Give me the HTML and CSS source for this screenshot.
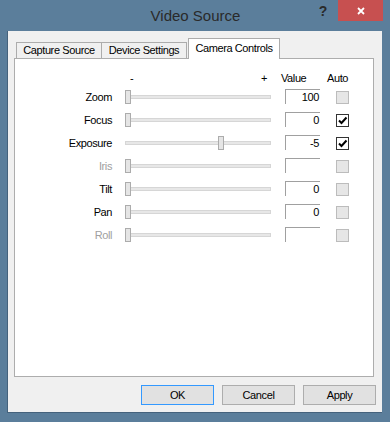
FILE: index.html
```html
<!DOCTYPE html>
<html lang="en">
<head>
    <meta charset="UTF-8">
    <title>Video Source</title>
    <link rel="stylesheet" href="styles.css">
</head>
<body>
    <div class="window">
        <div class="title-bar">
            <div></div>
            <div class="title">Video Source</div>
            <div class="title-controls">
                <span class="help">?</span>
                <span class="close">
                    <svg width="8" height="8" viewBox="0 0 8 8"><path d="M1 1 L7 7 M7 1 L1 7" stroke="#fff" stroke-width="1.8" fill="none"/></svg>
                </span>
            </div>
        </div>

        <div class="client">
            <div class="tabs">
                <div class="tab tab-capture">Capture Source</div>
                <div class="tab tab-device">Device Settings</div>
                <div class="tab tab-selected">Camera Controls</div>
            </div>

            <div class="tab-panel">
                <div class="control-grid header-row">
                    <div></div>
                    <div class="range-marks"><span>-</span><span>+</span></div>
                    <div class="head-value">Value</div>
                    <div class="head-auto">Auto</div>
                </div>

                <div class="control-grid control-row">
                    <div class="label">Zoom</div>
                    <div class="slider"><div class="track"></div><div class="thumb" style="left: 0px"></div></div>
                    <div class="value">100</div>
                    <div class="check disabled"></div>
                </div>
                <div class="control-grid control-row">
                    <div class="label">Focus</div>
                    <div class="slider"><div class="track"></div><div class="thumb" style="left: 0px"></div></div>
                    <div class="value">0</div>
                    <div class="check checked"><svg width="11" height="11" viewBox="0 0 11 11"><path d="M2 5.5 L4.5 8 L9.5 2.5" stroke="#000" stroke-width="2" fill="none"/></svg></div>
                </div>
                <div class="control-grid control-row">
                    <div class="label">Exposure</div>
                    <div class="slider"><div class="track"></div><div class="thumb" style="left: 93px"></div></div>
                    <div class="value">-5</div>
                    <div class="check checked"><svg width="11" height="11" viewBox="0 0 11 11"><path d="M2 5.5 L4.5 8 L9.5 2.5" stroke="#000" stroke-width="2" fill="none"/></svg></div>
                </div>
                <div class="control-grid control-row">
                    <div class="label off">Iris</div>
                    <div class="slider"><div class="track"></div><div class="thumb" style="left: 0px"></div></div>
                    <div class="value"></div>
                    <div class="check disabled"></div>
                </div>
                <div class="control-grid control-row">
                    <div class="label">Tilt</div>
                    <div class="slider"><div class="track"></div><div class="thumb" style="left: 0px"></div></div>
                    <div class="value">0</div>
                    <div class="check disabled"></div>
                </div>
                <div class="control-grid control-row">
                    <div class="label">Pan</div>
                    <div class="slider"><div class="track"></div><div class="thumb" style="left: 0px"></div></div>
                    <div class="value">0</div>
                    <div class="check disabled"></div>
                </div>
                <div class="control-grid control-row">
                    <div class="label off">Roll</div>
                    <div class="slider"><div class="track"></div><div class="thumb" style="left: 0px"></div></div>
                    <div class="value"></div>
                    <div class="check disabled"></div>
                </div>
            </div>

            <div class="buttons">
                <button class="button default">OK</button>
                <button class="button">Cancel</button>
                <button class="button">Apply</button>
            </div>
        </div>
    </div>
</body>
</html>
```

FILE: styles.css
```css
body {
    margin: 0;
    padding: 0;
    background-color: #5b7e9b;
    font-family: "Liberation Sans", Arial, sans-serif;
    font-size: 11px;
    letter-spacing: -0.4px;
    color: #000;
}
.window {
    width: 390px;
    height: 422px;
    box-sizing: border-box;
    background-color: #5b7e9b;
}
.title-bar {
    height: 31px;
    display: grid;
    grid-template-columns: 1fr auto 1fr;
    align-items: start;
}
.title {
    font-size: 15px;
    letter-spacing: 0;
    color: #2a2a2a;
    line-height: 31px;
    padding-left: 1px;
}
.title-controls {
    display: flex;
    justify-content: flex-end;
    align-items: flex-start;
    padding-right: 7px;
}
.help {
    font-size: 14px;
    font-weight: bold;
    color: #2a2a2a;
    line-height: 14px;
    margin-top: 4px;
    margin-right: 11px;
}
.close {
    width: 45px;
    height: 21px;
    background-color: #c75050;
    display: flex;
    align-items: center;
    justify-content: center;
    padding-top: 1px;
    box-sizing: border-box;
}
.client {
    margin: 0 8px 0 7px;
    height: 382px;
    box-sizing: border-box;
    background-color: #f0f0f0;
    border-left: 1px solid #45627c;
    border-bottom: 1px solid #45627c;
    padding: 7px 0 0 6px;
}
.tabs {
    display: flex;
    align-items: flex-end;
    height: 20px;
    padding-left: 2px;
}
.tab {
    height: 16px;
    box-sizing: border-box;
    border: 1px solid #acacac;
    border-bottom: none;
    background-color: #f0f0f0;
    text-align: center;
    line-height: 15px;
    white-space: nowrap;
}
.tab-capture {
    width: 86px;
}
.tab-device {
    width: 85px;
    border-left: none;
}
.tab-selected {
    width: 92px;
    height: 21px;
    margin-left: 1px;
    margin-bottom: -1px;
    background-color: #fff;
    position: relative;
    line-height: 18px;
}
.tab-panel {
    width: 360px;
    height: 319px;
    box-sizing: border-box;
    border: 1px solid #adadad;
    background-color: #fff;
    padding-top: 11px;
}
.control-grid {
    display: grid;
    grid-template-columns: 97px 159px 49px 29px;
    align-items: center;
}
.header-row {
    height: 15px;
}
.range-marks {
    display: flex;
    justify-content: space-between;
    padding: 0 4px 0 18px;
}
.head-value {
    padding-left: 10px;
}
.head-auto {
    padding-left: 7px;
}
.control-row {
    height: 23px;
}
.label {
    text-align: right;
}
.label.off {
    color: #a0a0a0;
}
.slider {
    justify-self: end;
    width: 146px;
    height: 14px;
    position: relative;
    display: flex;
    align-items: center;
}
.track {
    width: 100%;
    height: 4px;
    box-sizing: border-box;
    background-color: #e7e7e7;
    border: 1px solid #d6d6d6;
}
.thumb {
    position: absolute;
    top: 0;
    width: 6px;
    height: 14px;
    box-sizing: border-box;
    background-color: #e5e5e5;
    border: 1px solid #acacac;
}
.value {
    justify-self: end;
    width: 35px;
    height: 15px;
    box-sizing: border-box;
    border-top: 1px solid #a0a0a0;
    border-left: 1px solid #a0a0a0;
    text-align: right;
    padding-right: 1px;
    line-height: 14px;
    background-color: #fff;
}
.check {
    justify-self: end;
    width: 13px;
    height: 13px;
    box-sizing: border-box;
    margin-top: 2px;
    display: flex;
    align-items: center;
    justify-content: center;
}
.check.disabled {
    background-color: #e6e6e6;
    border: 1px solid #bcbcbc;
}
.check.checked {
    background-color: #fff;
    border: 1px solid #333;
}
.buttons {
    display: flex;
    justify-content: flex-end;
    gap: 8px;
    padding-right: 6px;
    margin-top: 8px;
}
.button {
    width: 73px;
    height: 20px;
    box-sizing: border-box;
    background-color: #e1e1e1;
    border: 1px solid #adadad;
    font-family: "Liberation Sans", Arial, sans-serif;
    font-size: 11px;
    letter-spacing: -0.4px;
    color: #000;
    padding: 0;
    margin: 0;
}
.button.default {
    border-color: #3399ff;
}
```
